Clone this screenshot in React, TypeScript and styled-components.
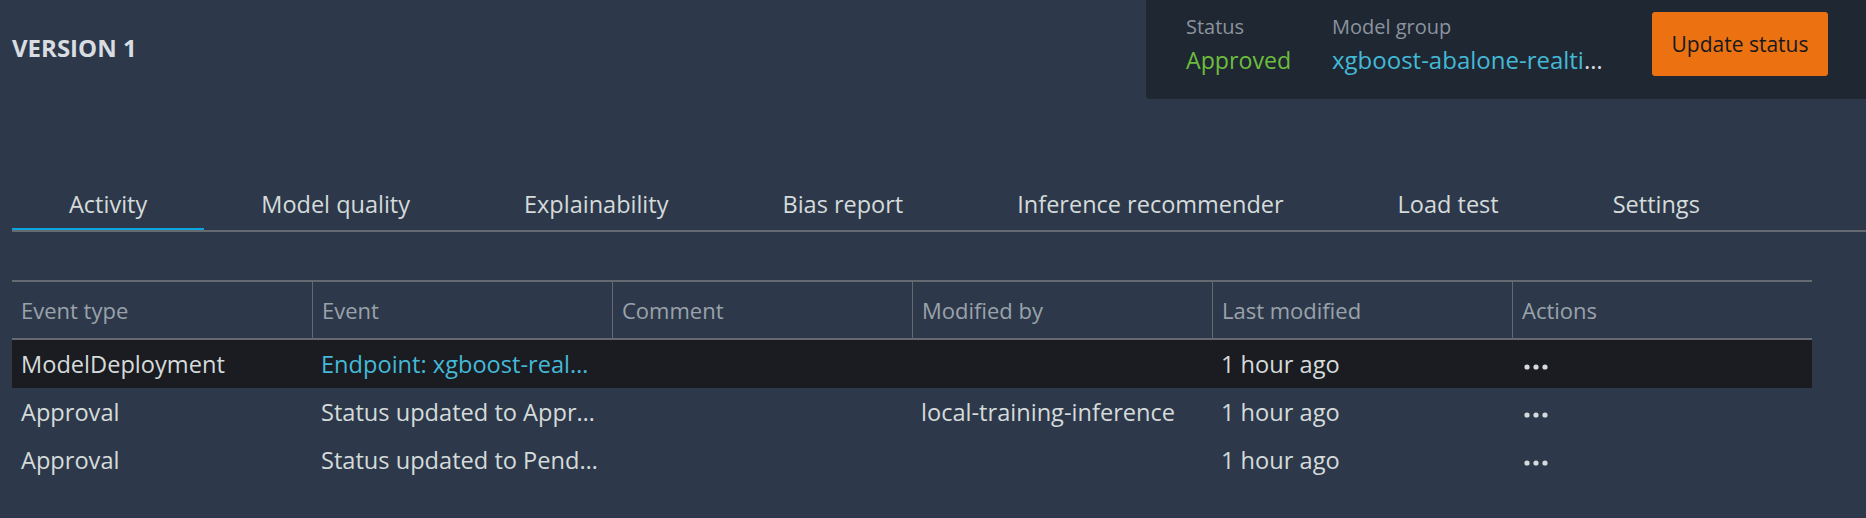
import React from "react";
import styled, { createGlobalStyle } from "styled-components";

const GlobalStyle = createGlobalStyle`
  html, body {
    margin: 0;
    padding: 0;
    background: #2d394a;
  }
  body {
    font-family: "Open Sans", "Noto Sans", Arial, sans-serif;
    color: #d5dbdb;
    min-height: 518px;
  }
  * { box-sizing: border-box; }
`;

const Page = styled.div`
  padding-left: 12px;
  min-height: 518px;
`;

const Header = styled.header`
  display: flex;
  justify-content: space-between;
  align-items: flex-start;
`;

const Title = styled.h1`
  margin: 32px 0 0;
  font-size: 24px;
  line-height: 32px;
  font-weight: 700;
  color: #d9dde2;
`;

const StatusPanel = styled.section`
  display: grid;
  grid-template-columns: 146px 320px 176px;
  align-items: start;
  width: 720px;
  height: 99px;
  padding: 13px 38px 0 40px;
  background: #1f2733;
  border-bottom-left-radius: 4px;
`;

const Field = styled.div`
  display: flex;
  flex-direction: column;
  gap: 3px;
  min-width: 0;
`;

const FieldLabel = styled.span`
  font-size: 20px;
  line-height: 28px;
  color: #8c949e;
`;

const StatusValue = styled.span`
  font-size: 23.2px;
  line-height: 32px;
  color: #6cbd3c;
`;

const Truncated = styled.span`
  font-size: 24px;
  line-height: 32px;
  color: #d5dbdb;
  white-space: nowrap;
  overflow: hidden;
  text-overflow: ellipsis;
`;

const LinkText = styled.a`
  color: #44b9d6;
  text-decoration: none;
  cursor: pointer;
`;

const PrimaryButton = styled.button`
  height: 64px;
  margin-top: -1px;
  padding: 0 18px;
  border: none;
  border-radius: 3px;
  background: #ec7211;
  color: #16191f;
  font-family: inherit;
  font-size: 21px;
  font-weight: 400;
  cursor: pointer;
`;

const TabList = styled.nav`
  display: flex;
  margin-top: 89px;
  border-bottom: 2px solid #646a70;
`;

const Tab = styled.button<{ $active?: boolean }>`
  padding: 0 57px 8px;
  border: none;
  border-bottom: 2px solid ${(p) => (p.$active ? "#0aa5dc" : "transparent")};
  background: transparent;
  color: #d5dbdb;
  font-family: inherit;
  font-size: 23.5px;
  line-height: 32px;
  font-weight: 500;
  white-space: nowrap;
  cursor: pointer;
`;

const Table = styled.table`
  margin-top: 48px;
  width: 1800px;
  table-layout: fixed;
  border-collapse: separate;
  border-spacing: 0;
`;

const HeadCell = styled.th`
  padding: 12px 9px;
  border-top: 2px solid #646a70;
  border-bottom: 2px solid #646a70;
  text-align: left;
  font-size: 22px;
  line-height: 32px;
  font-weight: 400;
  color: #9aa2ab;
  white-space: nowrap;
  & + & {
    border-left: 1px solid #646a70;
  }
`;

const Row = styled.tr<{ $selected?: boolean }>`
  background: ${(p) => (p.$selected ? "#1a1c21" : "transparent")};
`;

const Cell = styled.td`
  padding: 8px 10px 8px 9px;
  font-size: 23.6px;
  line-height: 32px;
  color: #d5dbdb;
  white-space: nowrap;
  overflow: hidden;
  text-overflow: ellipsis;
`;

const ActionsButton = styled.button`
  display: inline-flex;
  align-items: center;
  margin-left: 3px;
  padding: 0;
  border: none;
  background: transparent;
  cursor: pointer;
  vertical-align: middle;
`;

const DotsIcon = () => (
  <svg width="24" height="6" viewBox="0 0 24 6" aria-hidden="true">
    <circle cx="3" cy="3" r="2.6" fill="#d5dbdb" />
    <circle cx="12" cy="3" r="2.6" fill="#d5dbdb" />
    <circle cx="21" cy="3" r="2.6" fill="#d5dbdb" />
  </svg>
);

const tabs = [
  "Activity",
  "Model quality",
  "Explainability",
  "Bias report",
  "Inference recommender",
  "Load test",
  "Settings",
];

const columns = ["Event type", "Event", "Comment", "Modified by", "Last modified", "Actions"];

type EventRow = {
  type: string;
  event: string;
  link?: boolean;
  comment: string;
  by: string;
  modified: string;
  selected?: boolean;
};

const rows: EventRow[] = [
  { type: "ModelDeployment", event: "Endpoint: xgboost-real…", link: true, comment: "", by: "", modified: "1 hour ago", selected: true },
  { type: "Approval", event: "Status updated to Appr…", comment: "", by: "local-training-inference", modified: "1 hour ago" },
  { type: "Approval", event: "Status updated to Pend…", comment: "", by: "", modified: "1 hour ago" },
];

export default function App() {
  return (
    <>
      <GlobalStyle />
      <Page>
        <Header>
          <Title>VERSION 1</Title>
          <StatusPanel>
            <Field>
              <FieldLabel>Status</FieldLabel>
              <StatusValue>Approved</StatusValue>
            </Field>
            <Field>
              <FieldLabel>Model group</FieldLabel>
              <Truncated>
                <LinkText>xgboost-abalone-realti</LinkText>…
              </Truncated>
            </Field>
            <PrimaryButton>Update status</PrimaryButton>
          </StatusPanel>
        </Header>

        <TabList>
          {tabs.map((t, i) => (
            <Tab key={t} $active={i === 0}>
              {t}
            </Tab>
          ))}
        </TabList>

        <Table>
          <thead>
            <tr>
              {columns.map((c) => (
                <HeadCell key={c}>{c}</HeadCell>
              ))}
            </tr>
          </thead>
          <tbody>
            {rows.map((r, i) => (
              <Row key={i} $selected={r.selected}>
                <Cell>{r.type}</Cell>
                <Cell>{r.link ? <LinkText>{r.event}</LinkText> : r.event}</Cell>
                <Cell>{r.comment}</Cell>
                <Cell>{r.by}</Cell>
                <Cell>{r.modified}</Cell>
                <Cell>
                  <ActionsButton aria-label="Actions">
                    <DotsIcon />
                  </ActionsButton>
                </Cell>
              </Row>
            ))}
          </tbody>
        </Table>
      </Page>
    </>
  );
}
